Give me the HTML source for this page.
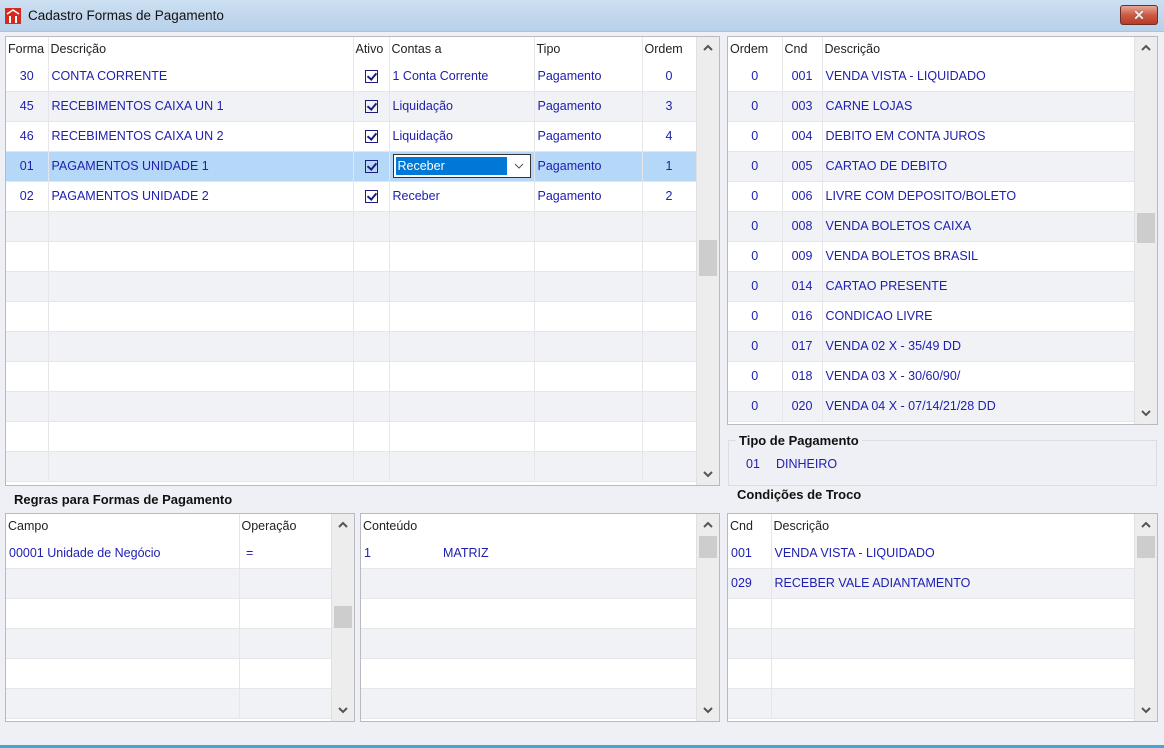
<!DOCTYPE html>
<html><head><meta charset="utf-8"><style>
*{box-sizing:border-box;margin:0;padding:0}
body{width:1164px;height:748px;background:#eff0f5;font-family:"Liberation Sans",sans-serif;font-size:12.5px;color:#2020b0;position:relative;overflow:hidden}
.title{position:absolute;left:0;top:0;width:1164px;height:32px;background:linear-gradient(#cddff2,#b8d0ea);border-bottom:1px solid #a9c2de}
.title span{position:absolute;left:28px;top:8px;color:#111;font-size:13.5px}
.close{position:absolute;left:1120px;top:5px;width:38px;height:20px;border:1px solid #6a3028;border-radius:3px;background:linear-gradient(#e7a897,#cd5a44 50%,#b83a25);color:#eee;font-weight:bold;text-align:center;font-size:14px;line-height:18px;text-shadow:0 0 1px #333}
.box{position:absolute;background:#fff;border:1px solid #b9bac0;overflow:hidden}
table{border-collapse:collapse;table-layout:fixed;position:absolute;left:0;top:0}
td{height:30px;border-right:1px solid #e6e6ea;border-bottom:1px solid #e6e6ea;padding:0 3px;white-space:nowrap;overflow:hidden}
tr.h td{height:24px;color:#222;border-bottom:none;padding:0 2px}
tr.g td{background:#f1f2f6}
tr.s td{background:#b5d8f9}
.r{text-align:center}
.sb{position:absolute;top:0;bottom:0;right:0;width:23px;background:#ededed;border-left:1px solid #e0e0e0}
.sb svg{position:absolute;left:6px}
.sb .up{top:7px}.sb .dn{bottom:7px}
.th{position:absolute;left:2px;width:18px;background:#cdcdcd}
.cb{display:inline-block;width:13px;height:13px;border:1.5px solid #1c1c80;position:relative;vertical-align:middle}
.cb:after{content:"";position:absolute;left:3px;top:0px;width:4px;height:7px;border:solid #1c1c80;border-width:0 2px 2px 0;transform:rotate(40deg)}
.lbl{position:absolute;color:#111;font-weight:bold;font-size:13px}
</style></head><body>
<div class="title"><svg style="position:absolute;left:5px;top:8px" width="16" height="16"><rect x="0" y="0" width="16" height="16" fill="#d42a20"/><path d="M2 6 L8 2 L14 6" stroke="#fff" stroke-width="1.5" fill="none"/><rect x="4" y="8" width="2" height="7" fill="#fff"/><rect x="10" y="8" width="2" height="7" fill="#fff"/></svg><span>Cadastro Formas de Pagamento</span></div>
<div class="close">✕</div>

<div class="box" style="left:5px;top:36px;width:715px;height:450px">
<table style="width:690px">
<colgroup><col style="width:42px"><col style="width:305px"><col style="width:36px"><col style="width:145px"><col style="width:108px"><col style="width:54px"></colgroup>
<tr class="h"><td>Forma</td><td>Descrição</td><td>Ativo</td><td>Contas a</td><td>Tipo</td><td>Ordem</td></tr>
<tr><td class="r">30</td><td>CONTA CORRENTE</td><td class="r"><span class="cb"></span></td><td>1 Conta Corrente</td><td>Pagamento</td><td class="r">0</td></tr>
<tr class="g"><td class="r">45</td><td>RECEBIMENTOS CAIXA UN 1</td><td class="r"><span class="cb"></span></td><td>Liquidação</td><td>Pagamento</td><td class="r">3</td></tr>
<tr><td class="r">46</td><td>RECEBIMENTOS CAIXA UN 2</td><td class="r"><span class="cb"></span></td><td>Liquidação</td><td>Pagamento</td><td class="r">4</td></tr>
<tr class="s"><td class="r">01</td><td>PAGAMENTOS UNIDADE 1</td><td class="r"><span class="cb"></span></td><td style="padding:0 3px"><div style="height:24px;border:1px solid #333;background:#fff;position:relative"><span style="position:absolute;left:2px;top:2px;width:111px;height:18px;background:#0078d7;color:#fff;padding-left:2px;line-height:18px">Receber</span><svg style="position:absolute;right:6px;top:8px" width="10" height="6"><path d="M1 1 L5 5 L9 1" stroke="#555" fill="none"/></svg></div></td><td>Pagamento</td><td class="r">1</td></tr>
<tr><td class="r">02</td><td>PAGAMENTOS UNIDADE 2</td><td class="r"><span class="cb"></span></td><td>Receber</td><td>Pagamento</td><td class="r">2</td></tr>
<tr class="g"><td></td><td></td><td></td><td></td><td></td><td></td></tr>
<tr><td></td><td></td><td></td><td></td><td></td><td></td></tr>
<tr class="g"><td></td><td></td><td></td><td></td><td></td><td></td></tr>
<tr><td></td><td></td><td></td><td></td><td></td><td></td></tr>
<tr class="g"><td></td><td></td><td></td><td></td><td></td><td></td></tr>
<tr><td></td><td></td><td></td><td></td><td></td><td></td></tr>
<tr class="g"><td></td><td></td><td></td><td></td><td></td><td></td></tr>
<tr><td></td><td></td><td></td><td></td><td></td><td></td></tr>
<tr class="g"><td></td><td></td><td></td><td></td><td></td><td></td></tr>
</table>
<div class="sb"><svg class="up" width="10" height="7"><path d="M1 6 L5 2 L9 6" stroke="#555" stroke-width="2" fill="none"/></svg><div class="th" style="top:203px;height:36px"></div><svg class="dn" width="10" height="7"><path d="M1 1 L5 5 L9 1" stroke="#555" stroke-width="2" fill="none"/></svg></div>
</div>

<div class="box" style="left:727px;top:36px;width:431px;height:389px">
<table style="width:406px">
<colgroup><col style="width:54px"><col style="width:40px"><col style="width:312px"></colgroup>
<tr class="h"><td>Ordem</td><td>Cnd</td><td>Descrição</td></tr>
<tr><td class="r">0</td><td class="r">001</td><td>VENDA VISTA - LIQUIDADO</td></tr>
<tr class="g"><td class="r">0</td><td class="r">003</td><td>CARNE LOJAS</td></tr>
<tr><td class="r">0</td><td class="r">004</td><td>DEBITO EM CONTA JUROS</td></tr>
<tr class="g"><td class="r">0</td><td class="r">005</td><td>CARTAO DE DEBITO</td></tr>
<tr><td class="r">0</td><td class="r">006</td><td>LIVRE COM DEPOSITO/BOLETO</td></tr>
<tr class="g"><td class="r">0</td><td class="r">008</td><td>VENDA BOLETOS CAIXA</td></tr>
<tr><td class="r">0</td><td class="r">009</td><td>VENDA BOLETOS BRASIL</td></tr>
<tr class="g"><td class="r">0</td><td class="r">014</td><td>CARTAO PRESENTE</td></tr>
<tr><td class="r">0</td><td class="r">016</td><td>CONDICAO LIVRE</td></tr>
<tr class="g"><td class="r">0</td><td class="r">017</td><td>VENDA 02 X - 35/49 DD</td></tr>
<tr><td class="r">0</td><td class="r">018</td><td>VENDA 03 X - 30/60/90/</td></tr>
<tr class="g"><td class="r">0</td><td class="r">020</td><td>VENDA 04 X - 07/14/21/28 DD</td></tr>
</table>
<div class="sb"><svg class="up" width="10" height="7"><path d="M1 6 L5 2 L9 6" stroke="#555" stroke-width="2" fill="none"/></svg><div class="th" style="top:176px;height:30px"></div><svg class="dn" width="10" height="7"><path d="M1 1 L5 5 L9 1" stroke="#555" stroke-width="2" fill="none"/></svg></div>
</div>

<div style="position:absolute;left:728px;top:440px;width:429px;height:46px;border:1px solid #dcdde2"></div>
<div class="lbl" style="left:736px;top:433px;background:#eff0f5;padding:0 3px">Tipo de Pagamento</div>
<div style="position:absolute;left:746px;top:457px">01</div>
<div style="position:absolute;left:776px;top:457px">DINHEIRO</div>

<div class="lbl" style="left:14px;top:492px">Regras para Formas de Pagamento</div>
<div class="lbl" style="left:737px;top:487px">Condições de Troco</div>

<div class="box" style="left:5px;top:513px;width:350px;height:209px">
<table style="width:325px">
<colgroup><col style="width:233px"><col style="width:92px"></colgroup>
<tr class="h"><td>Campo</td><td>Operação</td></tr>
<tr><td>00001 Unidade de Negócio</td><td>&nbsp;=</td></tr>
<tr class="g"><td></td><td></td></tr><tr><td></td><td></td></tr><tr class="g"><td></td><td></td></tr><tr><td></td><td></td></tr><tr class="g"><td></td><td></td></tr>
</table>
<div class="sb"><svg class="up" width="10" height="7"><path d="M1 6 L5 2 L9 6" stroke="#555" stroke-width="2" fill="none"/></svg><div class="th" style="top:92px;height:22px"></div><svg class="dn" width="10" height="7"><path d="M1 1 L5 5 L9 1" stroke="#555" stroke-width="2" fill="none"/></svg></div>
</div>

<div class="box" style="left:360px;top:513px;width:360px;height:209px">
<table style="width:335px">
<colgroup><col style="width:335px"></colgroup>
<tr class="h"><td>Conteúdo</td></tr>
<tr><td>1<span style="position:absolute;left:82px">MATRIZ</span></td></tr>
<tr class="g"><td></td></tr><tr><td></td></tr><tr class="g"><td></td></tr><tr><td></td></tr><tr class="g"><td></td></tr>
</table>
<div class="sb"><svg class="up" width="10" height="7"><path d="M1 6 L5 2 L9 6" stroke="#555" stroke-width="2" fill="none"/></svg><div class="th" style="top:22px;height:22px"></div><svg class="dn" width="10" height="7"><path d="M1 1 L5 5 L9 1" stroke="#555" stroke-width="2" fill="none"/></svg></div>
</div>

<div class="box" style="left:727px;top:513px;width:431px;height:209px">
<table style="width:406px">
<colgroup><col style="width:43px"><col style="width:363px"></colgroup>
<tr class="h"><td>Cnd</td><td>Descrição</td></tr>
<tr><td>001</td><td>VENDA VISTA - LIQUIDADO</td></tr>
<tr class="g"><td>029</td><td>RECEBER VALE ADIANTAMENTO</td></tr>
<tr><td></td><td></td></tr><tr class="g"><td></td><td></td></tr><tr><td></td><td></td></tr><tr class="g"><td></td><td></td></tr>
</table>
<div class="sb"><svg class="up" width="10" height="7"><path d="M1 6 L5 2 L9 6" stroke="#555" stroke-width="2" fill="none"/></svg><div class="th" style="top:22px;height:22px"></div><svg class="dn" width="10" height="7"><path d="M1 1 L5 5 L9 1" stroke="#555" stroke-width="2" fill="none"/></svg></div>
</div>

<div style="position:absolute;left:0;top:745px;width:1164px;height:3px;background:#3fa9d4"></div>
</body></html>
